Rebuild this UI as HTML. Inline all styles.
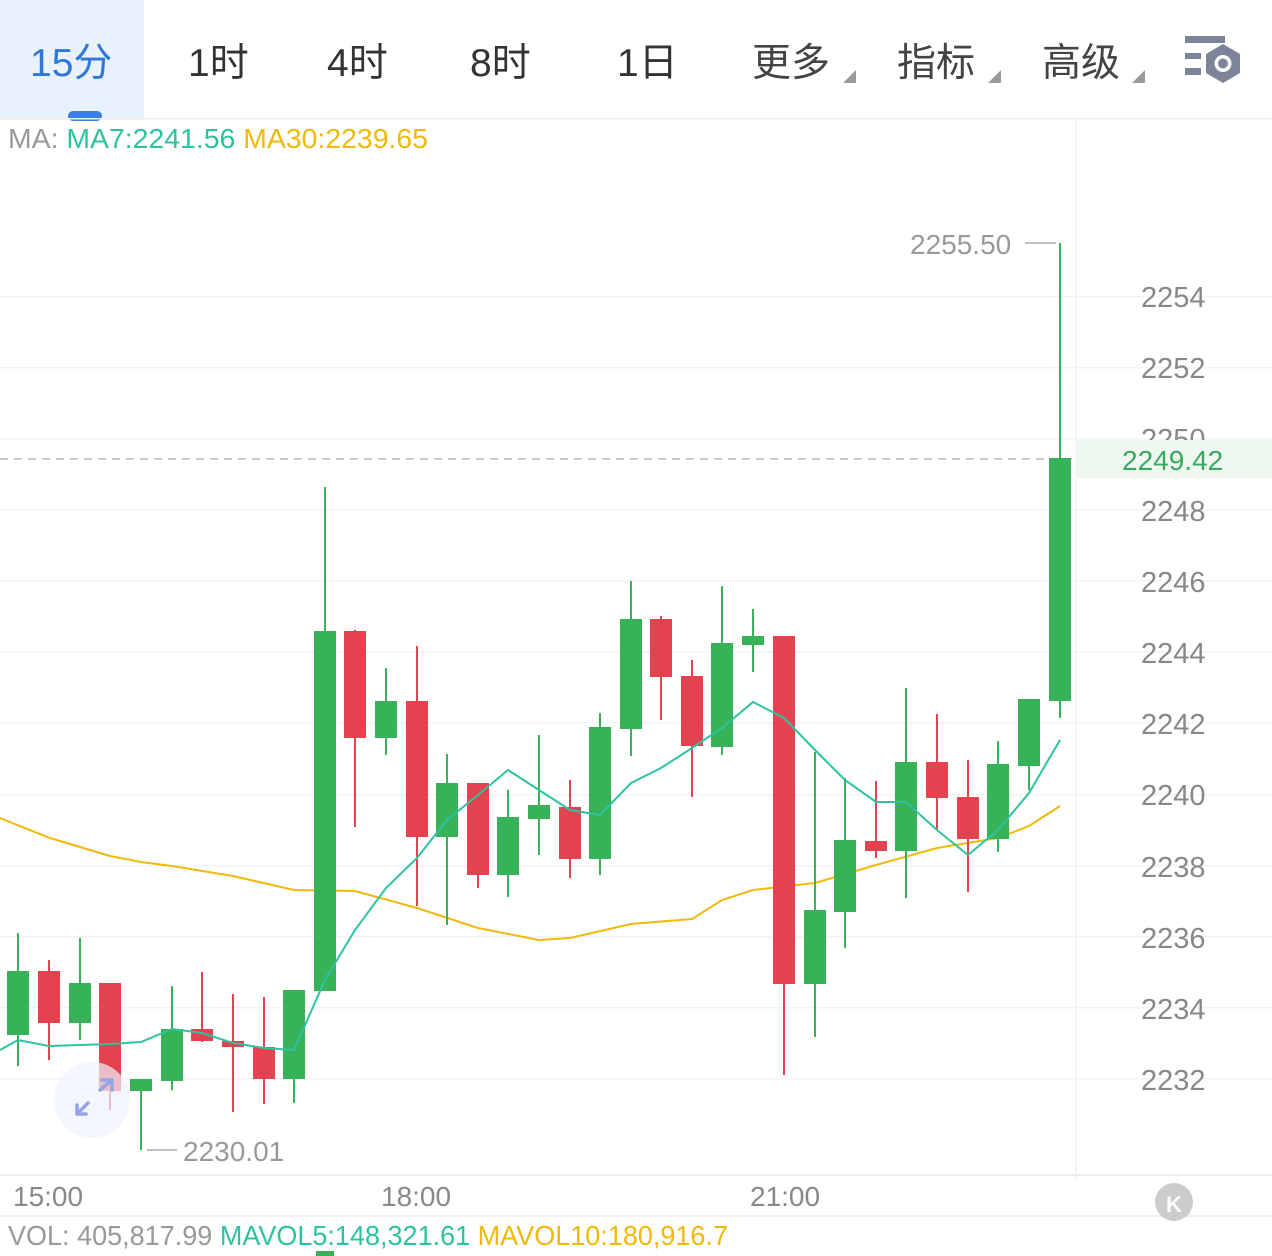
<!DOCTYPE html>
<html><head><meta charset="utf-8"><style>
html,body{margin:0;padding:0;background:#fff;width:1272px;height:1256px;overflow:hidden}
svg{display:block}
text{font-family:"Liberation Sans","Noto Sans CJK SC",sans-serif}
</style></head><body>
<svg width="1272" height="1256" viewBox="0 0 1272 1256" xmlns="http://www.w3.org/2000/svg">
<rect x="0" y="0" width="144" height="118" fill="#e9f1fc"/>
<rect x="68" y="111" width="34" height="10" rx="5" fill="#3a7fe0"/>
<rect x="0" y="118" width="1272" height="1.5" fill="#eeeeee"/>
<g font-size="39" fill="#333">
<text x="30" y="76" fill="#2f78d8">15分</text>
<text x="188" y="76">1时</text>
<text x="327" y="76">4时</text>
<text x="470" y="76">8时</text>
<text x="617" y="76">1日</text>
<text x="752" y="76" fill="#444">更多</text>
<text x="897" y="76" fill="#444">指标</text>
<text x="1042" y="76" fill="#444">高级</text>
</g>
<g fill="#9a9a9a">
<polygon points="843,83 856,70 856,83"/>
<polygon points="988,83 1001,70 1001,83"/>
<polygon points="1132,83 1145,70 1145,83"/>
</g>
<g fill="#7b8498">
<rect x="1185" y="36" width="40" height="7"/>
<rect x="1185" y="53" width="16" height="6"/>
<rect x="1185" y="68" width="16" height="7"/>
<polygon points="1223,44 1240,54 1240,73 1223,83 1206,73 1206,54"/>
</g>
<circle cx="1223" cy="63.5" r="8.5" fill="#fff"/>
<circle cx="1223" cy="63.5" r="5" fill="#7b8498"/>
<rect x="1075" y="119" width="1.5" height="1060" fill="#f0f0f0"/>
<g fill="#f3f3f3">
<rect x="0" y="296" width="1272" height="1.5"/><rect x="0" y="367" width="1272" height="1.5"/>
<rect x="0" y="438" width="1272" height="1.5"/><rect x="0" y="509" width="1272" height="1.5"/>
<rect x="0" y="580" width="1272" height="1.5"/><rect x="0" y="651" width="1272" height="1.5"/>
<rect x="0" y="722" width="1272" height="1.5"/><rect x="0" y="794" width="1272" height="1.5"/>
<rect x="0" y="865" width="1272" height="1.5"/><rect x="0" y="936" width="1272" height="1.5"/>
<rect x="0" y="1007" width="1272" height="1.5"/><rect x="0" y="1078" width="1272" height="1.5"/>
</g>
<rect x="0" y="1174" width="1272" height="2" fill="#eeeeee"/>
<rect x="0" y="1215" width="1272" height="2" fill="#f0f0f0"/>
<text x="8" y="148" font-size="28" fill="#999" textLength="420" lengthAdjust="spacingAndGlyphs">MA: <tspan fill="#2ec3a0">MA7:2241.56</tspan> <tspan fill="#f0b90b">MA30:2239.65</tspan></text>
<g font-size="29" fill="#888">
<text x="1141" y="307">2254</text><text x="1141" y="378">2252</text>
<text x="1141" y="449">2250</text><text x="1141" y="521">2248</text>
<text x="1141" y="592">2246</text><text x="1141" y="663">2244</text>
<text x="1141" y="734">2242</text><text x="1141" y="805">2240</text>
<text x="1141" y="877">2238</text><text x="1141" y="948">2236</text>
<text x="1141" y="1019">2234</text><text x="1141" y="1090">2232</text>
</g>
<rect x="1077" y="440" width="195" height="38" fill="#eef8f1"/>
<text x="1122" y="470" font-size="28" fill="#3aa860">2249.42</text>
<line x1="0" y1="459" x2="1076" y2="459" stroke="#bbb" stroke-width="1.5" stroke-dasharray="8,6"/>
<polyline fill="none" stroke="#f0b90b" stroke-width="2" points="0,818 50,838 110,856 141,862 172,866 233,876 294,890 355,891 417,908 478,928 539,940 570,938 631,924 692,919 722,900 753,890 815,883 876,865 937,848 998,838 1029,826 1060,806"/>
<g stroke-width="2">
<g fill="#38b259" stroke="#38b259">
<line x1="18" y1="933" x2="18" y2="1066"/><rect x="8" y="972" width="20" height="62"/>
<line x1="80" y1="938" x2="80" y2="1040"/><rect x="70" y="984" width="20" height="38"/>
<line x1="141" y1="1080" x2="141" y2="1150"/><rect x="131" y="1080" width="20" height="10"/>
<line x1="172" y1="986" x2="172" y2="1090"/><rect x="162" y="1030" width="20" height="50"/>
<line x1="294" y1="991" x2="294" y2="1103"/><rect x="284" y="991" width="20" height="87"/>
<line x1="325" y1="487" x2="325" y2="990"/><rect x="315" y="632" width="20" height="358"/>
<line x1="386" y1="668" x2="386" y2="755"/><rect x="376" y="702" width="20" height="35"/>
<line x1="447" y1="754" x2="447" y2="925"/><rect x="437" y="784" width="20" height="52"/>
<line x1="508" y1="790" x2="508" y2="897"/><rect x="498" y="818" width="20" height="56"/>
<line x1="539" y1="735" x2="539" y2="855"/><rect x="529" y="806" width="20" height="12"/>
<line x1="600" y1="713" x2="600" y2="875"/><rect x="590" y="728" width="20" height="130"/>
<line x1="631" y1="581" x2="631" y2="756"/><rect x="621" y="620" width="20" height="108"/>
<line x1="722" y1="586" x2="722" y2="755"/><rect x="712" y="644" width="20" height="102"/>
<line x1="753" y1="609" x2="753" y2="672"/><rect x="743" y="637" width="20" height="7"/>
<line x1="815" y1="752" x2="815" y2="1037"/><rect x="805" y="911" width="20" height="72"/>
<line x1="845" y1="778" x2="845" y2="948"/><rect x="835" y="841" width="20" height="70"/>
<line x1="906" y1="688" x2="906" y2="898"/><rect x="896" y="763" width="20" height="87"/>
<line x1="998" y1="741" x2="998" y2="852"/><rect x="988" y="765" width="20" height="73"/>
<line x1="1029" y1="700" x2="1029" y2="790"/><rect x="1019" y="700" width="20" height="65"/>
<line x1="1060" y1="243" x2="1060" y2="718"/><rect x="1050" y="459" width="20" height="241"/>
</g>
<g fill="#e3434f" stroke="#e3434f">
<line x1="49" y1="960" x2="49" y2="1060"/><rect x="39" y="972" width="20" height="50"/>
<line x1="110" y1="984" x2="110" y2="1110"/><rect x="100" y="984" width="20" height="106"/>
<line x1="202" y1="972" x2="202" y2="1042"/><rect x="192" y="1030" width="20" height="10"/>
<line x1="233" y1="994" x2="233" y2="1112"/><rect x="223" y="1042" width="20" height="4"/>
<line x1="264" y1="997" x2="264" y2="1104"/><rect x="254" y="1048" width="20" height="30"/>
<line x1="355" y1="630" x2="355" y2="827"/><rect x="345" y="632" width="20" height="105"/>
<line x1="417" y1="646" x2="417" y2="906"/><rect x="407" y="702" width="20" height="134"/>
<line x1="478" y1="784" x2="478" y2="888"/><rect x="468" y="784" width="20" height="90"/>
<line x1="570" y1="780" x2="570" y2="878"/><rect x="560" y="808" width="20" height="50"/>
<line x1="661" y1="616" x2="661" y2="720"/><rect x="651" y="620" width="20" height="56"/>
<line x1="692" y1="660" x2="692" y2="797"/><rect x="682" y="677" width="20" height="68"/>
<line x1="784" y1="637" x2="784" y2="1075"/><rect x="774" y="637" width="20" height="346"/>
<line x1="876" y1="781" x2="876" y2="858"/><rect x="866" y="842" width="20" height="8"/>
<line x1="937" y1="714" x2="937" y2="830"/><rect x="927" y="763" width="20" height="34"/>
<line x1="968" y1="760" x2="968" y2="892"/><rect x="958" y="798" width="20" height="40"/>
</g>
</g>
<polyline fill="none" stroke="#2ec3a0" stroke-width="2" points="0,1050 18,1040 49,1046 80,1045 110,1044 141,1042 172,1029 202,1033 233,1043 264,1048 294,1050 325,980 355,930 386,888 417,858 447,820 478,795 508,770 539,790 570,810 600,815 631,783 661,768 692,748 722,728 753,702 784,718 815,750 845,780 876,802 906,802 937,830 968,855 998,830 1029,793 1060,740"/>
<line x1="1025" y1="243" x2="1056" y2="243" stroke="#aaa" stroke-width="1.5"/>
<text x="910" y="254" font-size="28" fill="#999">2255.50</text>
<line x1="147" y1="1150" x2="177" y2="1150" stroke="#aaa" stroke-width="1.5"/>
<text x="183" y="1161" font-size="28" fill="#999">2230.01</text>
<circle cx="92" cy="1100" r="38" fill="#eef2fb" opacity="0.7"/>
<g stroke="#93a6e3" stroke-width="3.5" fill="none" stroke-linecap="round">
<path d="M77,1114 L88,1103 M77,1114 L77,1105 M77,1114 L86,1114"/>
<path d="M100,1090 L112,1080 M112,1080 L102,1080 M112,1080 L112,1090"/>
</g>
<g font-size="28" fill="#888">
<text x="13" y="1206">15:00</text><text x="381" y="1206">18:00</text><text x="750" y="1206">21:00</text>
</g>
<circle cx="1174" cy="1202" r="19" fill="#cccccc"/>
<text x="1166" y="1212" font-size="22" font-weight="bold" fill="#fff">K</text>
<text x="8" y="1245" font-size="28" fill="#999" textLength="720" lengthAdjust="spacingAndGlyphs">VOL: 405,817.99 <tspan fill="#2ec3a0">MAVOL5:148,321.61</tspan> <tspan fill="#f0b90b">MAVOL10:180,916.7</tspan></text>
<rect x="316" y="1251" width="18" height="5" fill="#38b259"/>
</svg>
</body></html>
